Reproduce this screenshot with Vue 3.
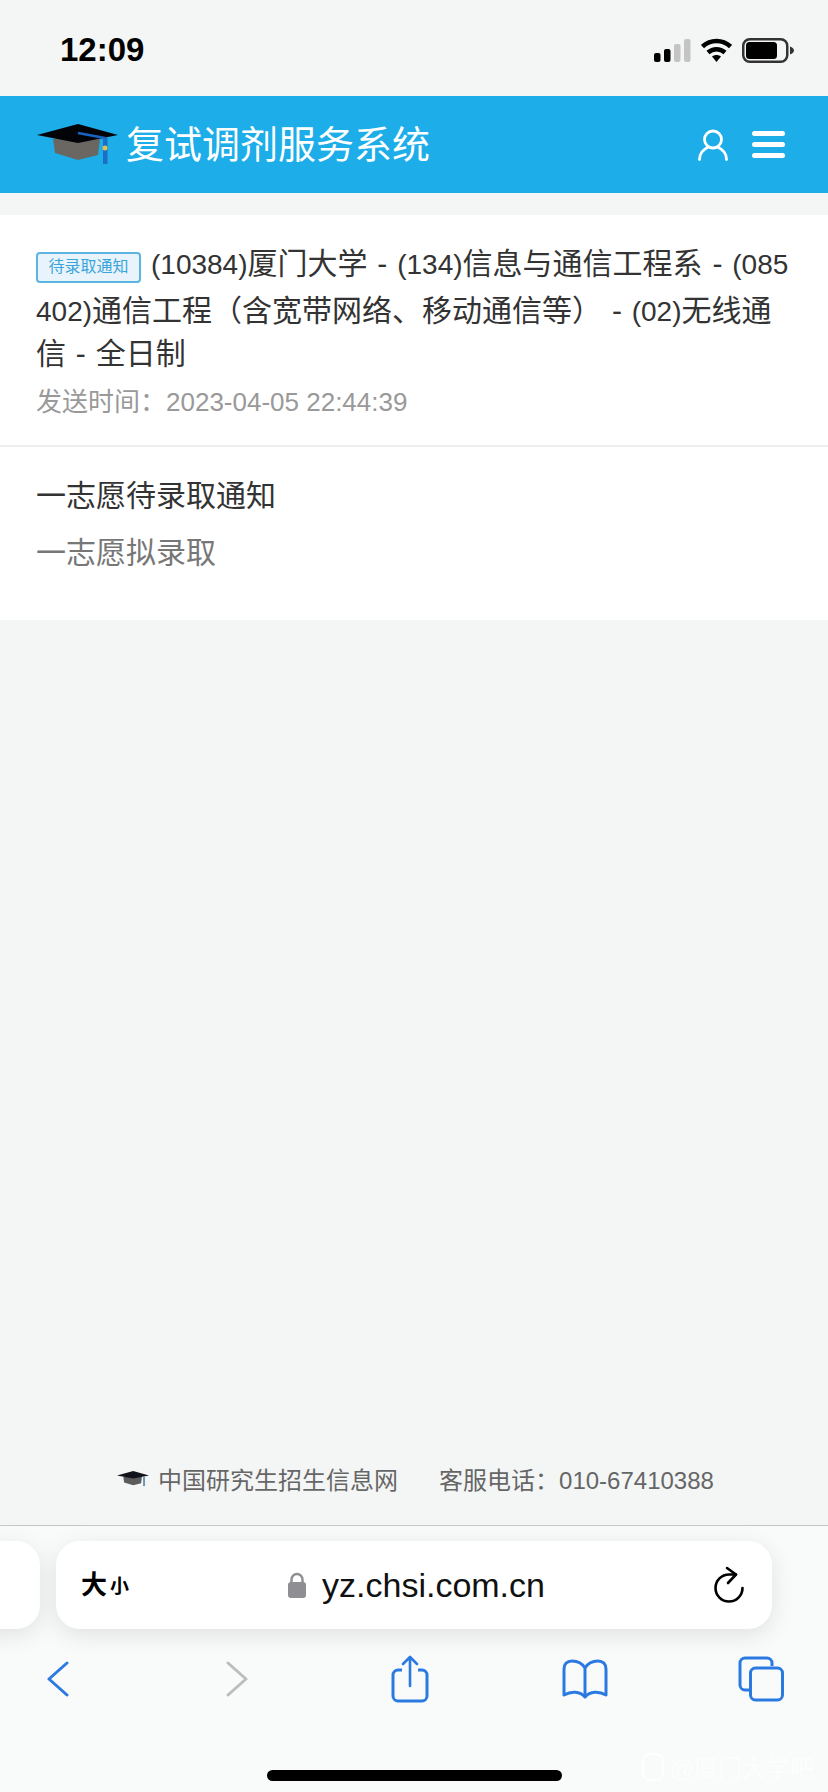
<script setup>
const title = '复试调剂服务系统'
</script>

<template>
  <div class="page">
    <div class="status-bar">
      <span class="clock">12:09</span>
      <div class="status-icons">
        <svg width="37" height="23" viewBox="0 0 37 23">
          <rect x="0" y="14" width="6.500" height="9" rx="2" fill="#000" />
          <rect x="10" y="10" width="6.500" height="13" rx="2" fill="#000" />
          <rect x="20" y="5" width="6.500" height="18" rx="2" fill="#c4c4c4" />
          <rect x="30" y="0" width="6.500" height="23" rx="2" fill="#c4c4c4" />
        </svg>
        <svg width="31" height="24" viewBox="0 0 31 24">
          <path d="M1.500 8.500C9.500 1 21.500 1 29.500 8.500" fill="none" stroke="#000" stroke-width="4.500" />
          <path d="M7 14.500c5-4.500 12-4.500 17 0" fill="none" stroke="#000" stroke-width="4.500" />
          <path d="M11 18.500 15.500 24 20 18.500c-2.500-2-6.500-2-9 0z" fill="#000" />
        </svg>
        <svg width="52" height="25" viewBox="0 0 52 25">
          <rect x="1.250" y="1.250" width="44" height="22.500" rx="6.500" fill="none" stroke="#333" stroke-width="2.500" />
          <rect x="4" y="4" width="31" height="17" rx="3.500" fill="#000" />
          <path d="M48 8.500c2.500 1 4 2.500 4 4s-1.500 3-4 4z" fill="#333" />
        </svg>
      </div>
    </div>

    <header class="top-bar">
      <svg class="cap" width="81" height="40" viewBox="0 0 81 40">
        <path d="M16 15 L63 15 L61 31 L41 36 L18 29 Z" fill="#6a6763" />
        <path d="M0 11 L41 0 L81 11 L41 19 Z" fill="#020408" />
        <path d="M41 9 L68 14" fill="none" stroke="#1764c4" stroke-width="2.500" />
        <rect x="66" y="14" width="4.500" height="26" fill="#1a6fc6" />
        <circle cx="68" cy="24" r="2.500" fill="#e5c24c" />
      </svg>
      <span class="title">{{ title }}</span>
      <div class="top-actions">
        <svg width="30" height="32" viewBox="0 0 30 32">
          <circle cx="15" cy="10.500" r="8.500" fill="none" stroke="#fff" stroke-width="2.800" />
          <path d="M1.500 30.500c0-7 4.500-10.500 9-12.500M28.500 30.500c0-7-4.500-10.500-9-12.500" fill="none" stroke="#fff" stroke-width="2.800" stroke-linecap="round" />
        </svg>
        <div class="burger"><i></i><i></i><i></i></div>
      </div>
    </header>

    <main class="notice">
      <section class="notice-head">
        <p class="subject">
          <span class="tag">待录取通知</span>
          <span class="latin">(10384)</span>厦门大学 - <span class="latin">(134)</span>信息与通信工程系 - <span class="latin">(085402)</span>通信工程（含宽带网络、移动通信等） - <span class="latin">(02)</span>无线通信 - 全日制
        </p>
        <p class="sent">发送时间：2023-04-05 22:44:39</p>
      </section>
      <section class="notice-body">
        <p class="body-title">一志愿待录取通知</p>
        <p class="body-text">一志愿拟录取</p>
      </section>
    </main>

    <footer class="site-foot">
      <svg width="32" height="18" viewBox="0 0 81 40">
        <path d="M16 15 L63 15 L61 31 L41 36 L18 29 Z" fill="#5c5c5c" />
        <path d="M0 11 L41 0 L81 11 L41 19 Z" fill="#10141a" />
        <rect x="66" y="14" width="5" height="24" fill="#6f94b4" />
      </svg>
      <span class="foot-site">中国研究生招生信息网</span>
      <span>客服电话：010-67410388</span>
    </footer>

    <div class="browser">
      <div class="address-row">
        <div class="prev-tab"></div>
        <div class="address">
          <span class="text-size"><b>大</b><small>小</small></span>
          <div class="url">
            <svg width="18" height="26" viewBox="0 0 18 26">
              <path d="M3.500 12V7.500a5.500 5.500 0 0 1 11 0V12" fill="none" stroke="#8e8e93" stroke-width="2.400" />
              <rect x="0" y="10" width="18" height="16" rx="3" fill="#8e8e93" />
            </svg>
            <span>yz.chsi.com.cn</span>
          </div>
          <svg width="30" height="38" viewBox="0 0 30 38">
            <path d="M28.500 22A13.500 13.500 0 1 1 15 8.500H22" fill="none" stroke="#000" stroke-width="2.600" stroke-linecap="round" />
            <path d="M13 2l9 6.500L14 17" fill="none" stroke="#000" stroke-width="2.600" stroke-linecap="round" stroke-linejoin="round" />
          </svg>
        </div>
      </div>

      <nav class="toolbar">
        <svg width="22" height="36" viewBox="0 0 22 36">
          <path d="M20 2 2 18l18 16" fill="none" stroke="#2a7ae2" stroke-width="3" stroke-linecap="round" stroke-linejoin="round" />
        </svg>
        <svg class="tool-forward" width="22" height="36" viewBox="0 0 22 36">
          <path d="M2 2l18 16L2 34" fill="none" stroke="#bdbdbd" stroke-width="3" stroke-linecap="round" stroke-linejoin="round" />
        </svg>
        <svg class="tool-share" width="38" height="48" viewBox="0 0 38 48">
          <path d="M11 15H7a5 5 0 0 0-5 5v21a5 5 0 0 0 5 5h24a5 5 0 0 0 5-5V20a5 5 0 0 0-5-5h-4" fill="none" stroke="#2a7ae2" stroke-width="3" />
          <path d="M19 31V2M12 9l7-7 7 7" fill="none" stroke="#2a7ae2" stroke-width="2.600" stroke-linecap="round" stroke-linejoin="round" />
        </svg>
        <svg class="tool-book" width="48" height="40" viewBox="0 0 48 40">
          <path d="M24 9C21 4 16 2 11 2 6 2 3 5 3 10v26c7-4 16-4 21 2 5-6 14-6 21-2V10c0-5-3-8-8-8-5 0-10 2-13 7zM24 9v29" fill="none" stroke="#2a7ae2" stroke-width="3" stroke-linejoin="round" />
        </svg>
        <svg class="tool-tabs" width="46" height="46" viewBox="0 0 46 46">
          <path d="M34 10V7a5 5 0 0 0-5-5H7a5 5 0 0 0-5 5v22a5 5 0 0 0 5 5h4" fill="none" stroke="#2a7ae2" stroke-width="3" />
          <rect x="12.500" y="12" width="32" height="32" rx="5" fill="none" stroke="#2a7ae2" stroke-width="3" />
        </svg>
      </nav>

      <div class="home-bar"></div>
      <div class="watermark"><i></i><span>@厦门大学吧</span></div>
    </div>
  </div>
</template>

<style>
body {
  background: #f4f6f6;
}
</style>

<style scoped>
.page {
  display: flex;
  flex-direction: column;
  width: 828px;
  height: 1792px;
  overflow: hidden;
  background: #f4f6f6;
  font-family: "Liberation Sans", "Noto Sans CJK SC", sans-serif;
  color: #333;
}

p {
  margin: 0;
}

.status-bar {
  display: flex;
  align-items: center;
  justify-content: space-between;
  height: 96px;
  padding: 4px 34px 0 60px;
  box-sizing: border-box;
  flex-shrink: 0;
}

.clock {
  font-size: 33px;
  font-weight: 700;
  color: #000;
}

.status-icons {
  display: flex;
  align-items: center;
  gap: 10px;
}

.top-bar {
  display: flex;
  align-items: center;
  height: 97px;
  padding: 0 43px 0 37px;
  flex-shrink: 0;
  background: #1dade9;
  color: #fff;
}

.cap {
  margin-right: 8px;
  margin-top: -2px;
}

.title {
  padding-bottom: 6px;
  font-size: 38px;
}

.top-actions {
  display: flex;
  align-items: center;
  gap: 24px;
  margin-left: auto;
}

.burger {
  display: flex;
  flex-direction: column;
  gap: 6px;
  width: 33px;
}

.burger i {
  display: block;
  height: 5px;
  border-radius: 3px;
  background: #fff;
}

.notice {
  margin-top: 22px;
  background: #fff;
  flex-shrink: 0;
}

.notice-head {
  height: 232px;
  padding: 28px 36px 0;
  box-sizing: border-box;
  border-bottom: 2px solid #eeeeee;
}

.subject {
  font-size: 30px;
  line-height: 42px;
  word-spacing: 1.500px;
  color: #333;
  word-break: break-all;
}

.latin {
  font-size: 28px;
}

.tag {
  display: inline-block;
  box-sizing: border-box;
  width: 105px;
  height: 31px;
  margin-right: 10px;
  margin-bottom: 7px;
  border: 2px solid #5cb5e0;
  border-radius: 4px;
  background: #e8f3fb;
  color: #3aa5dc;
  font-size: 16px;
  line-height: 26px;
  text-align: center;
  vertical-align: 2px;
}

.sent {
  margin-top: 7px;
  font-size: 26px;
  line-height: 40px;
  color: #999;
}

.notice-body {
  height: 173px;
  padding: 28px 36px 0;
  box-sizing: border-box;
}

.body-title {
  font-size: 30px;
  line-height: 42px;
  color: #333;
}

.body-text {
  margin-top: 15px;
  font-size: 30px;
  line-height: 42px;
  color: #777;
}

.site-foot {
  display: flex;
  align-items: center;
  justify-content: center;
  margin-top: auto;
  height: 78px;
  padding: 0 0 15px 3px;
  box-sizing: border-box;
  gap: 9px;
  font-size: 24px;
  color: #666;
  flex-shrink: 0;
}

.foot-site {
  margin-right: 32px;
}

.browser {
  position: relative;
  height: 266px;
  border-top: 1px solid #c6c6c6;
  background: #f9fafa;
  flex-shrink: 0;
}

.address-row {
  display: flex;
  gap: 16px;
  margin-top: 15px;
  margin-left: -40px;
}

.prev-tab,
.address {
  height: 88px;
  border-radius: 24px;
  background: #fff;
  box-shadow: 0 6px 24px rgba(0, 0, 0, 0.1);
}

.prev-tab {
  width: 80px;
  flex-shrink: 0;
}

.address {
  display: flex;
  align-items: center;
  justify-content: space-between;
  width: 716px;
  padding: 0 28px 0 25px;
  box-sizing: border-box;
  flex-shrink: 0;
}

.text-size {
  display: flex;
  align-items: flex-end;
  gap: 3px;
  color: #000;
}

.text-size b {
  font-size: 26px;
  line-height: 32px;
}

.text-size small {
  font-size: 19px;
  font-weight: 700;
  line-height: 28px;
}

.url {
  display: flex;
  align-items: center;
  gap: 16px;
  margin-right: 10px;
  font-size: 34px;
  color: #111;
}

.toolbar {
  display: flex;
  align-items: center;
  height: 48px;
  margin-top: 26px;
  padding-left: 47px;
}

.tool-forward {
  margin-left: 157px;
}

.tool-share {
  margin-left: 143px;
}

.tool-book {
  margin-left: 132px;
}

.tool-tabs {
  margin-left: 129px;
}

.home-bar {
  position: absolute;
  left: 267px;
  bottom: 11px;
  width: 295px;
  height: 11px;
  border-radius: 6px;
  background: #000;
}

.watermark {
  position: absolute;
  right: 14px;
  bottom: 8px;
  display: flex;
  align-items: center;
  gap: 6px;
  font-size: 24px;
  color: rgba(255, 255, 255, 0.7);
}

.watermark i {
  display: block;
  width: 18px;
  height: 24px;
  border: 2px solid rgba(255, 255, 255, 0.7);
  border-radius: 8px;
}
</style>
